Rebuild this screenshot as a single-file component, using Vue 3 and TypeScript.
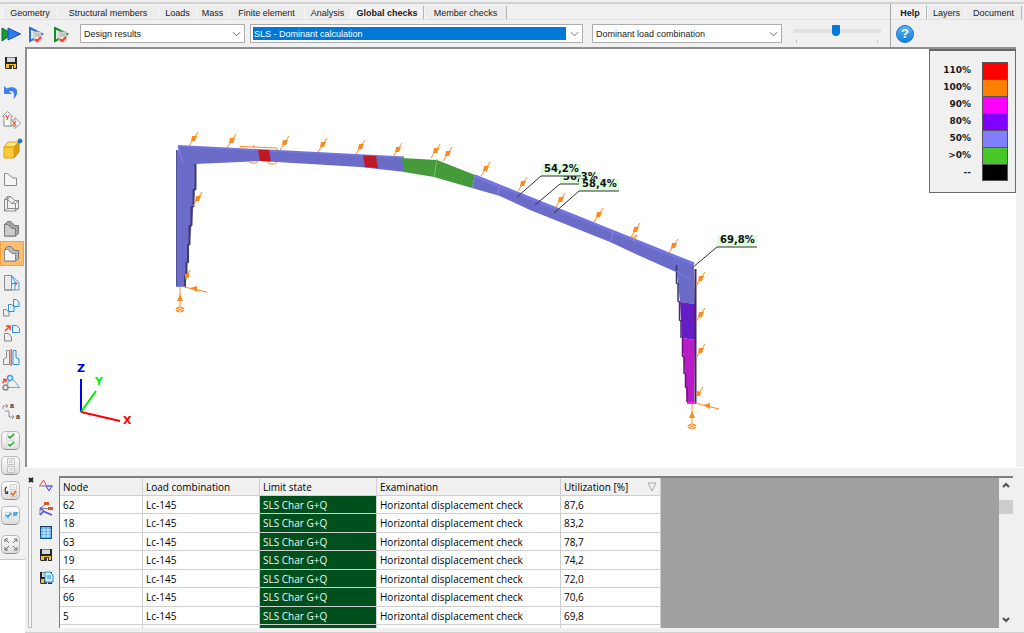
<script setup lang="ts">
import { ref } from 'vue'

interface Shape {
  d?: string
  fill?: string
  stroke?: string
  w?: number
  text?: string
  x?: number
  y?: number
}
interface Tool {
  name: string
  shapes: Shape[]
  raised?: boolean
  active?: boolean
}

const tabs = ['Geometry', 'Structural members', 'Loads', 'Mass', 'Finite element', 'Analysis', 'Global checks', 'Member checks']
const activeTab = ref('Global checks')
const sideTabs = ['Help', 'Layers', 'Document']
const activeSide = ref('Help')
const scale = ref(49)

const saveShapes: Shape[] = [
  { d: 'M4 4H16V16H5L4 15Z', fill: '#262626' },
  { d: 'M6 4.500H14V9H6Z', fill: '#d3dade' },
  { d: 'M5 11H15V15H5Z', fill: '#f2c12e' },
  { d: 'M8 12H13V16H8Z', fill: '#3a3a3a' },
  { d: 'M11 13H12V16H11Z', fill: '#eeeeee' },
]

const runTools: Tool[] = [
  {
    name: 'Run all',
    shapes: [
      { d: 'M2 4L12 10L2 17Z', fill: '#189a3a', stroke: '#0b6a25' },
      { d: 'M8 4L20.500 10L8 16Z', fill: '#2f7df0', stroke: '#1550b8' },
    ],
  },
  {
    name: 'Run design',
    shapes: [
      { d: 'M5 4L17 10L5 17Z', fill: '#dcebff', stroke: '#2b6fe0', w: 2 },
      { d: 'M9 8H16V17H9Z', fill: '#eeeeee', stroke: '#b5b5b5' },
      { d: 'M10 10H15M10 12H15', stroke: '#999999' },
      { d: 'M10 15L12 17L16 13', stroke: '#ff3a2a', w: 2 },
    ],
  },
  {
    name: 'Run check',
    shapes: [
      { d: 'M5 4L17 10L5 17Z', fill: '#dff5e2', stroke: '#178a2e', w: 2 },
      { d: 'M9 8H16V17H9Z', fill: '#eeeeee', stroke: '#b5b5b5' },
      { d: 'M10 10H15M10 12H15', stroke: '#999999' },
      { d: 'M10 15L12 17L16 13', stroke: '#ff3a2a', w: 2 },
    ],
  },
]

const toolGroups: Tool[][] = [
  [{ name: 'Save', shapes: saveShapes }],
  [{ name: 'Undo', shapes: [{ d: 'M3 4V12H11L8 9.500C12 8 14 11 12.500 17C19 12 17 2 6 6.500Z', fill: '#3f82ec' }] }],
  [
    {
      name: 'View direction',
      shapes: [
        { d: 'M10 9H14V6.500L19.500 12L14 17.500V15H3V9Z', fill: '#f4f4f4', stroke: '#999999' },
        { d: 'M1.500 5.500L6.500 0.500L11.500 5.500H10V15H3V5.500Z', fill: '#f8f8f8', stroke: '#999999' },
        { text: 'Y', x: 4, y: 9, fill: '#f03a22' },
        { text: 'X', x: 11, y: 15, fill: '#f03a22' },
      ],
    },
  ],
  [
    {
      name: 'Solid view',
      shapes: [
        { d: 'M3 7L7 2H18L13 7Z', fill: '#ffe27a', stroke: '#d9a416' },
        { d: 'M13 7L18 2V12L13 18Z', fill: '#dc9f13', stroke: '#c48a0d' },
        { d: 'M3 7H13V18H3Z', fill: '#fbc937', stroke: '#d9a416' },
        { d: 'M17 1A2 2 0 0 1 21 1A2 2 0 0 1 17 1Z', fill: '#1a79b8', stroke: '#1a79b8' },
      ],
    },
  ],
  [
    { name: 'Line view', shapes: [{ d: 'M3.500 4.500H6.500L12 9H15.500V16.500H3.500Z', fill: '#f5f5f5', stroke: '#8a8a8a' }] },
    {
      name: 'Wireframe view',
      shapes: [
        { d: 'M6.500 2.500H9.500L14 6.500H17.500V14.500H6.500Z', stroke: '#8a8a8a' },
        { d: 'M3.500 5.500H6.500L11 9.500H14.500V17H3.500ZM3.500 5.500L6.500 2.500M6.500 5.500L9.500 2.500M11 9.500L14 6.500M14.500 9.500L17.500 6.500M14.500 17L17.500 14.500M3.500 17L6.500 14.500', stroke: '#8a8a8a' },
      ],
    },
    {
      name: 'Hidden line view',
      shapes: [
        { d: 'M3.500 5.500L6.500 2.500H9.500L14 6.500H17.500V14.500L14.500 17H3.500Z', fill: '#a4a4a4', stroke: '#777777' },
        { d: 'M3.500 5.500H6.500L11 9.500H14.500V17H3.500Z', fill: '#cccccc', stroke: '#777777' },
      ],
    },
    {
      name: 'Shaded view',
      active: true,
      shapes: [
        { d: 'M3.500 5.500L6.500 2.500H9.500L14 6.500H17.500V14.500L14.500 17H3.500Z', fill: '#b8b8b8', stroke: '#777777' },
        { d: 'M3.500 5.500H6.500L11 9.500H14.500V17H3.500Z', fill: '#f5f5f5', stroke: '#888888' },
      ],
    },
  ],
  [
    {
      name: 'Move edge',
      shapes: [
        { d: 'M3.500 2.500H10.500V17H3.500Z', fill: '#ececec', stroke: '#8d8d8d' },
        { d: 'M10.500 2.500L18 9.500V17H10.500Z', fill: '#e4f1fc' },
        { d: 'M3.500 17V2.500H10.500M3.500 17H18M10.500 2.500V17', stroke: '#8d8d8d' },
        { d: 'M10.500 2.500L18 9.500V17M10.500 2.500L14 9V17', stroke: '#4e9fdc' },
        { d: 'M11 10.500H16M14 8.500L16 10.500L14 12.500', stroke: '#f2492a' },
      ],
    },
    {
      name: 'Copy',
      shapes: [
        { d: 'M2.500 11.500H5L8 14V18H2.500Z', fill: '#eeeeee', stroke: '#888888' },
        { d: 'M7.500 6.500H10.500L13 9V13.500H7.500Z', fill: '#e3f2fd', stroke: '#2b8fdd' },
        { d: 'M12.500 1.500H15.500L18 4V8.500H12.500Z', fill: '#e3f2fd', stroke: '#2b8fdd' },
      ],
    },
    {
      name: 'Move',
      shapes: [
        { d: 'M3.500 10.500H7.500L10.500 14V18H3.500Z', fill: '#eeeeee', stroke: '#888888' },
        { d: 'M11.500 2.500H15.500L18.500 5.500V9.500H11.500Z', fill: '#e3f2fd', stroke: '#2b8fdd' },
        { d: 'M4 8L9 3M5 3H9V7', stroke: '#f2492a', w: 1.5 },
      ],
    },
    {
      name: 'Mirror',
      shapes: [
        { d: 'M5.500 2.500H8.500V16.500H2.500V11L5.500 9.500Z', fill: '#eeeeee', stroke: '#888888' },
        { d: 'M12 2.500H15V9.500L18 11V16.500H12Z', fill: '#e3f2fd', stroke: '#2b8fdd' },
        { d: 'M10.200 1V18', stroke: '#ef5b46', w: 1.5 },
      ],
    },
    {
      name: 'Rotate',
      shapes: [
        { d: 'M5 14.500H18.500L11 5M5 14L9 6', stroke: '#5aaeea' },
        { d: 'M6.500 5A2.500 2.500 0 0 1 11.500 5A2.500 2.500 0 0 1 6.500 5Z', fill: '#e3f2fd', stroke: '#4b9fe0', w: 1.5 },
        { d: 'M2 14.500A2.500 2.500 0 0 1 7 14.500A2.500 2.500 0 0 1 2 14.500Z', fill: '#eeeeee', stroke: '#888888', w: 1.5 },
        { d: 'M1.500 10L4.500 6.500M2 6.500H5V9.500', stroke: '#f2492a', w: 1.5 },
      ],
    },
  ],
  [
    {
      name: 'Renumber',
      shapes: [
        { d: 'M2 7V4H7M5 2L7 4L5 6M4 9H8V15H13M11 13L13 15L11 17', stroke: '#929292' },
        { text: 'a', x: 9, y: 6, fill: '#333333' },
        { text: 'a', x: 15, y: 17, fill: '#333333' },
      ],
    },
  ],
  [
    {
      name: 'Select all',
      raised: true,
      shapes: [
        { d: 'M6 2H13V9H6ZM6 10H13V17H6Z', fill: '#ffffff', stroke: '#d6d6d6' },
        { d: 'M7 5L9 7L13 3M7 13L9 15L13 11', stroke: '#16a51d', w: 1.5 },
      ],
    },
    {
      name: 'Clear selection',
      raised: true,
      shapes: [{ d: 'M6.500 2.500H13.500V8.500H6.500ZM6.500 10.500H13.500V16.500H6.500ZM8 4L12 7M12 4L8 7M8 12L12 15M12 12L8 15', fill: '#f2f2f2', stroke: '#c3c3c3' }],
    },
    {
      name: 'Invert selection',
      raised: true,
      shapes: [
        { d: 'M9.500 3.500H15.500V8.500H9.500ZM9.500 10.500H15.500V15.500H9.500ZM11 5L14 7', fill: '#fafafa', stroke: '#cccccc' },
        { d: 'M6 6C3 7 4 12 6 12M4 12.500H6.500V10', stroke: '#444444', w: 1.2 },
        { d: 'M10 12L12 14L15 10', stroke: '#ff6a2a', w: 2 },
      ],
    },
    {
      name: 'Select by property',
      raised: true,
      shapes: [
        { d: 'M4.500 6.500H10.500V12.500H4.500Z', fill: '#ffffff', stroke: '#c9d8e4' },
        { d: 'M5 9L7 11L10 7M12 7H17M12 9H16', stroke: '#2494ea', w: 1.5 },
      ],
    },
  ],
  [
    {
      name: 'Zoom to fit',
      raised: true,
      shapes: [{ d: 'M8 8L4 4M4 7V4H7M12 8L16 4M13 4H16V7M8 11L4 15M4 12V15H7M12 11L16 15M13 15H16V12', stroke: '#6a6a6a' }],
    },
  ],
]

const dockTools: Tool[] = [
  {
    name: 'Diagram',
    shapes: [
      { d: 'M3 10H17', stroke: '#777777' },
      { d: 'M4 9L7.500 4L10 9', stroke: '#f04040' },
      { d: 'M10 10L13 15L16 10Z', fill: '#d8dcff', stroke: '#4545ec' },
    ],
  },
  {
    name: 'Detailed results',
    shapes: [
      { d: 'M4 16V10L7 7L11 4M4 9L14 10', stroke: '#777777' },
      { d: 'M4 9L9 13L16 16M4 16L8 12', stroke: '#4b50e4', w: 1.5 },
      { d: 'M8 3H13V6H8ZM12 8H17V11H12Z', fill: '#d4572c' },
    ],
  },
  {
    name: 'Table',
    shapes: [
      { d: 'M4.500 4.500H15.500V16.500H4.500Z', fill: '#4aa6ee', stroke: '#164e8a' },
      { d: 'M5 8H15M5 11H15M5 14H15M8 5V16M12 5V16', stroke: '#d8edff' },
      { d: 'M4 4H16V5H4Z', fill: '#14385f' },
    ],
  },
  { name: 'Save results', shapes: saveShapes },
  {
    name: 'Save results to document',
    shapes: [...saveShapes, { d: 'M9 4H14L17 7V14H9Z', fill: '#c9ebff', stroke: '#2294df' }, { d: 'M11 8H15M11 10H15', stroke: '#2294df' }],
  },
]

const legend = [
  { label: '110%', color: '#ff0000' },
  { label: '100%', color: '#ff8000' },
  { label: '90%', color: '#ff00ff' },
  { label: '80%', color: '#8000ff' },
  { label: '50%', color: '#8080ff' },
  { label: '>0%', color: '#48c828' },
  { label: '--', color: '#000000' },
]

const loads: [number, number][] = [
  [189, 146], [227, 148], [280, 150], [318, 152], [356, 154], [393, 157], [431, 158], [443, 161], [481, 176], [518, 191],
  [556, 207], [594, 222], [631, 237], [669, 253], [696, 286], [696, 322], [696, 358], [193, 206],
]

const labels = [
  { text: '56,3%', x: 560, y: 184, tx: 535, ty: 205 },
  { text: '54,2%', x: 541, y: 176, tx: 517, ty: 197 },
  { text: '58,4%', x: 579, y: 191, tx: 554, ty: 213 },
  { text: '69,8%', x: 717, y: 247, tx: 692, ty: 268 },
]

const rows = [
  ['62', '87,6'],
  ['18', '83,2'],
  ['63', '78,7'],
  ['19', '74,2'],
  ['64', '72,0'],
  ['66', '70,6'],
  ['5', '69,8'],
]
</script>

<template>
  <div class="app">
    <header class="ribbon">
      <section class="ribbon-main">
        <div class="tabs main-tabs" role="tablist">
          <button v-for="t in tabs" :key="t" role="tab" type="button" class="tab" :class="{ on: t === activeTab }" :aria-selected="t === activeTab" @click="activeTab = t">{{ t }}</button>
        </div>
        <div class="bar">
          <div class="run">
            <button v-for="t in runTools" :key="t.name" type="button" class="icon-btn" :aria-label="t.name">
              <svg viewBox="0 0 20 20" class="ico"><path v-for="(s, i) in t.shapes" :key="i" :d="s.d" :fill="s.fill ?? 'none'" :stroke="s.stroke" :stroke-width="s.w ?? 1" /></svg>
            </button>
          </div>
          <div class="combo c1">
            <select aria-label="Result type"><option>Design results</option></select>
            <svg viewBox="0 0 10 6" class="chev"><path d="M1 1L5 5L9 1" /></svg>
          </div>
          <div class="combo c2 chosen">
            <select aria-label="Calculation"><option>SLS - Dominant calculation</option></select>
            <svg viewBox="0 0 10 6" class="chev"><path d="M1 1L5 5L9 1" /></svg>
          </div>
          <div class="combo c3">
            <select aria-label="Load combination"><option>Dominant load combination</option></select>
            <svg viewBox="0 0 10 6" class="chev"><path d="M1 1L5 5L9 1" /></svg>
          </div>
          <div class="slider">
            <input v-model="scale" type="range" min="0" max="100" aria-label="Scale" />
            <div class="ticks"><i></i><i></i></div>
          </div>
        </div>
      </section>
      <section class="ribbon-side">
        <div class="tabs side-tabs" role="tablist">
          <button v-for="t in sideTabs" :key="t" role="tab" type="button" class="tab" :class="{ on: t === activeSide }" :aria-selected="t === activeSide" @click="activeSide = t">{{ t }}</button>
        </div>
        <div class="bar">
          <button type="button" class="help" aria-label="Help">?</button>
        </div>
      </section>
    </header>

    <main class="body">
      <aside class="tool-col">
        <div class="tools">
          <div v-for="(g, gi) in toolGroups" :key="gi" class="tool-group">
            <button v-for="t in g" :key="t.name" type="button" class="tool" :class="{ active: t.active }" :aria-label="t.name">
              <span :class="{ raised: t.raised }">
                <svg viewBox="0 0 20 20" class="ico">
                  <template v-for="(s, i) in t.shapes" :key="i">
                    <text v-if="s.text" :x="s.x" :y="s.y" :fill="s.fill" class="ico-text">{{ s.text }}</text>
                    <path v-else :d="s.d" :fill="s.fill ?? 'none'" :stroke="s.stroke" :stroke-width="s.w ?? 1" />
                  </template>
                </svg>
              </span>
            </button>
          </div>
        </div>
      </aside>

      <div class="work">
        <section class="viewport">
          <svg class="scene" viewBox="27 49 989 418" preserveAspectRatio="xMinYMin meet">
            <!-- left column -->
            <path d="M177 150L196 154L195 190L192 222L189 246L187 266L185 287L176 286Z" fill="#6a6cc8" />
            <path d="M195.500 156V189L193.500 190V206L191.500 207V225L189.500 226V244L188 245V262L186.500 263V275L185 276V287" fill="none" stroke="#3c3c70" stroke-width="2" />
            <path d="M176.500 150V286" stroke="#4f5096" />
            <!-- left rafter -->
            <path d="M178 146L404 157L405 172L360 167L260 161L196 164H181Z" fill="#6a6cc8" />
            <path d="M178 146L404 157.500" stroke="#7375d8" stroke-width="2" />
            <path d="M178 147L183 163" stroke="#8284e8" />
            <path d="M258 150H269L271 161.500L260 161Z" fill="#bd1a26" />
            <path d="M363 155.500L376 156L378 168L365 167Z" fill="#bd1a26" />
            <path d="M402 158L437 160L434 177L404 172Z" fill="#459a3c" />
            <path d="M437 160L475 175L472 188L434 177Z" fill="#459a3c" />
            <path d="M437 159L434 177" stroke="#63c650" />
            <!-- right rafter -->
            <path d="M475 175L694 263L692 278L676 272L640 256L610 242L530 210L500 196L472 188Z" fill="#6a6cc8" />
            <path d="M475 176L694 264" stroke="#7375e0" stroke-width="3" />
            <path d="M499 186L498 195M613 231L611 241" stroke="#8688e2" />
            <!-- right column -->
            <path d="M676 265L694 268L695 304L680 302Z" fill="#6a6cc8" />
            <path d="M680 302L695 304V340L682 338Z" fill="#661cc4" />
            <path d="M682 338L695 340L694 404L687 402Z" fill="#b91bc6" />
            <path d="M676.500 265V283L678 284V301L679.500 302V320L681 321V338" fill="none" stroke="#3c3470" stroke-width="1.500" />
            <path d="M682.500 338V356L684 357V373L685.500 374V387L687 388V402" fill="none" stroke="#701080" stroke-width="1.500" />
            <path d="M695.500 269V404" stroke="#43265e" stroke-width="2" />
            <path d="M676 271L690 279" stroke="#7d7fe6" />
            <path d="M687 403H695" stroke="#ee25ee" stroke-width="2" />
            <path d="M176 286.500H185" stroke="#8284f0" />

            <g class="loads">
              <g v-for="(p, i) in loads" :key="i" :transform="`translate(${p[0]} ${p[1]})`">
                <path d="M0 0L9 -14" />
                <path class="head" d="M2 -5L3 -10L8 -10L6 -5Z" />
              </g>
              <path d="M186 280L190 270M697 396L703 387" />
              <path class="head" d="M185 279V274H189V277ZM696 396L697 391L701 392L700 396Z" />
              <path d="M184 287L207 292M695 403L719 409M180 287V307M692 404V424" />
              <path class="head" d="M190 288L197 286V292ZM703 405L710 403V409ZM180 294L177 301H183ZM692 411L689 418H695Z" />
              <path d="M240 149V146.500L277 148V150M254 145L253 148M248 161C251 164 256 164 258 161M266 161C269 165 275 165 277 162M631 238L637 235L633 241" />
              <ellipse cx="180" cy="309.500" rx="4" ry="2.500" />
              <ellipse cx="692" cy="426.500" rx="4" ry="2.500" />
              <path d="M177 308L183 311M177 311L183 308M689 425L695 428M689 428L695 425" />
            </g>

            <g class="labels">
              <g v-for="l in labels" :key="l.text">
                <rect :x="l.x" :y="l.y - 12" width="40" height="12" />
                <text :x="l.x + 3" :y="l.y - 4">{{ l.text }}</text>
                <path :d="`M${l.tx} ${l.ty}L${l.x} ${l.y}H${l.x + 40}`" />
              </g>
            </g>

            <g class="axes">
              <path d="M81 412V379" stroke="#0000ff" />
              <path d="M81 412L96 391" stroke="#00ee00" />
              <path d="M81 412L120 421" stroke="#ff0000" />
              <text x="77" y="372" fill="#0000e0">Z</text>
              <text x="95" y="385" fill="#00ee00">Y</text>
              <text x="123" y="424" fill="#ff0000">X</text>
            </g>
          </svg>
          <ul class="legend">
            <li v-for="l in legend" :key="l.label">
              <span>{{ l.label }}</span>
              <i :style="{ background: l.color }"></i>
            </li>
          </ul>
        </section>

        <section class="dock">
          <div class="grip">
            <button type="button" class="close" aria-label="Close panel">
              <svg viewBox="0 0 6 6"><path d="M1 1L5 5M5 1L1 5" /></svg>
            </button>
            <div class="grip-line"></div>
          </div>
          <div class="dock-tools">
            <button v-for="t in dockTools" :key="t.name" type="button" class="icon-btn" :aria-label="t.name">
              <svg viewBox="0 0 20 20" class="ico"><path v-for="(s, i) in t.shapes" :key="i" :d="s.d" :fill="s.fill ?? 'none'" :stroke="s.stroke" :stroke-width="s.w ?? 1" /></svg>
            </button>
          </div>
          <div class="grid-panel">
            <div class="grid-area">
              <table>
                <colgroup><col class="w-node" /><col class="w-text" /><col class="w-text" /><col class="w-exam" /><col class="w-util" /></colgroup>
                <thead>
                  <tr>
                    <th>Node</th>
                    <th>Load combination</th>
                    <th>Limit state</th>
                    <th>Examination</th>
                    <th>
                      <div class="sorted">Utilization [%]<svg viewBox="0 0 10 10"><path d="M1 1H9L5 9Z" /></svg></div>
                    </th>
                  </tr>
                </thead>
                <tbody>
                  <tr v-for="r in rows" :key="r[0]">
                    <td>{{ r[0] }}</td>
                    <td>Lc-145</td>
                    <td class="ok">SLS Char G+Q</td>
                    <td>Horizontal displacement check</td>
                    <td>{{ r[1] }}</td>
                  </tr>
                  <tr><td></td><td></td><td class="ok"></td><td></td><td></td></tr>
                </tbody>
              </table>
            </div>
            <div class="scroll">
              <button type="button" aria-label="Scroll up"><svg viewBox="0 0 8 8"><path d="M1 5L4 2L7 5" /></svg></button>
              <div class="track"><div class="thumb"></div></div>
              <button type="button" aria-label="Scroll down"><svg viewBox="0 0 8 8"><path d="M1 2L4 5L7 2" /></svg></button>
            </div>
          </div>
        </section>
      </div>
    </main>
  </div>
</template>

<style>
body {
  margin: 0;
}
</style>

<style scoped>
.app {
  height: 100vh;
  min-height: 600px;
  display: flex;
  flex-direction: column;
  background: #f0f0f0;
  color: #1a1a1a;
  font: 9px/12px "Liberation Sans", Arial, sans-serif;
  overflow: hidden;
}
.app *,
.app *::before {
  box-sizing: border-box;
}
button {
  font: inherit;
  color: inherit;
  background: none;
  border: 0;
  padding: 0;
  margin: 0;
}
svg {
  display: block;
}
.ico {
  width: 20px;
  height: 20px;
  overflow: visible;
}
.ico-text {
  font: bold 7px "Liberation Sans", Arial, sans-serif;
}

.ribbon {
  display: flex;
  margin-top: 2px;
  border-top: 2px solid #d2d2d2;
}
.ribbon-main {
  flex: 1;
  min-width: 0;
}
.ribbon-side {
  width: 134px;
  border-left: 1px solid #a8a8a8;
}
.tabs {
  display: grid;
  height: 16px;
  padding: 2px 0 0 2px;
  border-bottom: 1px solid #e2e2e2;
}
.main-tabs {
  grid-template-columns: 55px 101px 38px 32px 76px 46px 74px 83px;
}
.side-tabs {
  grid-template-columns: 34px 38px 57px;
}
.tab {
  background: #ececec;
  border-left: 1px solid #f8f8f8;
  border-radius: 4px 0 0 0;
  white-space: nowrap;
  text-align: center;
}
.tab:last-child {
  border-right: 1px solid #b4b4b4;
}
.tab.on {
  font-weight: bold;
  background: #f2f2f2;
  border-right: 1px solid #b4b4b4;
}
.bar {
  display: flex;
  align-items: center;
  height: 27px;
}
.run {
  display: flex;
  gap: 5px;
  width: 80px;
}
.icon-btn {
  width: 20px;
  height: 20px;
}
.combo {
  position: relative;
  height: 19px;
  border: 1px solid #adadad;
  background: #fff;
  padding: 2px 16px 2px 2px;
}
.combo select {
  appearance: none;
  display: block;
  width: 100%;
  height: 13px;
  border: 0;
  padding: 0 1px;
  background: #fff;
  color: #1a1a1a;
  font: inherit;
}
.chosen select {
  background: #0078d7;
  color: #fff;
}
.chev {
  position: absolute;
  right: 3px;
  top: 6px;
  width: 9px;
  height: 6px;
  fill: none;
  stroke: #606060;
  pointer-events: none;
}
.c1 {
  width: 165px;
  margin-right: 5px;
}
.c2 {
  flex: 1;
  margin-right: 9px;
}
.c3 {
  width: 190px;
}
.slider {
  width: 88px;
  margin: 0 9px 0 11px;
}
.slider input {
  appearance: none;
  display: block;
  width: 100%;
  height: 12px;
  margin: 0 0 3px;
  background: none;
}
.slider input::-webkit-slider-runnable-track {
  height: 4px;
  background: #e2e2e2;
}
.slider input::-webkit-slider-thumb {
  appearance: none;
  width: 8px;
  height: 11px;
  margin-top: -4px;
  background: #0078d7;
  border-radius: 1px 1px 4px 4px;
}
.ticks {
  display: flex;
  justify-content: space-between;
  padding: 0 3px;
}
.ticks i {
  width: 1px;
  height: 3px;
  background: #c0c0c0;
}
.help {
  width: 18px;
  height: 18px;
  margin-left: 5px;
  border-radius: 50%;
  border: 1px solid #1673c4;
  background: linear-gradient(#55b4f2, #1480dc);
  color: #fff;
  font: bold 13px/16px "Liberation Sans", Arial, sans-serif;
  text-align: center;
}

.body {
  flex: 1;
  min-height: 0;
  display: flex;
}
.tool-col {
  width: 25px;
  background: #fff;
}
.tools {
  display: flex;
  flex-direction: column;
  gap: 4px;
  padding: 3px 0 2px;
  background: #f0f0f0;
  border-bottom: 1px solid #c8c8c8;
}
.tool {
  display: flex;
  width: 24px;
  height: 25px;
  padding-left: 1px;
  align-items: center;
}
.tool.active {
  background: #fdbf6e;
  border: 1px solid #f5a23c;
  padding-left: 0;
}
.raised {
  height: 19px;
  width: 19px;
  border-radius: 5px;
  background: linear-gradient(#fff, #dcdcdc);
  border: 1px solid #b9b9b9;
  border-bottom-color: #8e8e8e;
  overflow: hidden;
}
.raised .ico {
  margin: -1px;
}

.work {
  flex: 1;
  min-width: 0;
  display: flex;
  flex-direction: column;
}
.viewport {
  position: relative;
  flex: 1;
  min-height: 0;
  margin-right: 8px;
  background: #fff;
  border: solid #8f8f8f;
  border-width: 2px 0 0 2px;
}
.scene {
  width: 100%;
  height: 100%;
}
.loads {
  fill: none;
  stroke: #fb8b1e;
}
.loads .head {
  fill: #fb8b1e;
  stroke: none;
}
.labels rect {
  fill: #e0fbe0;
}
.labels path {
  fill: none;
  stroke: #303030;
}
.labels text {
  font: bold 10px "DejaVu Sans", Verdana, sans-serif;
  fill: #111;
}
.axes path {
  stroke-width: 2px;
}
.axes text {
  font: bold 11px "DejaVu Sans", Verdana, sans-serif;
}
.legend {
  position: absolute;
  top: 0;
  right: 0;
  width: 87px;
  height: 144px;
  margin: 0;
  padding: 11px 7px 13px 0;
  list-style: none;
  display: grid;
  grid-template-rows: repeat(7, 1fr);
  background: #f0f0f0;
  border: 1px solid #6c6c6c;
  border-top: 2px solid #666;
  font: bold 9px/17px "DejaVu Sans", Verdana, sans-serif;
}
.legend li {
  display: grid;
  grid-template-columns: 1fr 26px;
  gap: 11px;
  text-align: right;
}
.legend i {
  border: 1px solid #555;
  border-bottom: 0;
}
.legend li:last-child i {
  border-bottom: 1px solid #555;
}

.dock {
  height: 166px;
  display: flex;
  padding: 8px 11px 4px 3px;
  border-top: 1px solid #fff;
  border-bottom: 1px solid #d0d0d0;
}
.grip {
  width: 8px;
  display: flex;
  flex-direction: column;
  gap: 4px;
  padding-top: 1px;
}
.close {
  width: 6px;
  height: 6px;
}
.close svg {
  width: 6px;
  height: 6px;
  stroke: #222;
  stroke-width: 2px;
}
.grip-line {
  flex: 1;
  width: 4px;
  border: 1px solid #bcbcbc;
  background: #f8f8f8;
}
.dock-tools {
  width: 23px;
  display: flex;
  flex-direction: column;
  gap: 3px;
}
.grid-panel {
  flex: 1;
  min-width: 0;
  display: flex;
  border-top: 2px solid #7e7e7e;
  border-left: 1px solid #7e7e7e;
}
.grid-area {
  flex: 1;
  min-width: 0;
  overflow: hidden;
  background: #a0a0a0;
}
table {
  table-layout: fixed;
  width: 601px;
  border-collapse: separate;
  border-spacing: 0;
  font: 10px/12px "Open Sans", "Noto Sans", sans-serif;
  color: #000;
}
.w-node {
  width: 83px;
}
.w-text {
  width: 117px;
}
.w-exam {
  width: 184px;
}
.w-util {
  width: 100px;
}
th,
td {
  padding: 0 3px;
  text-align: left;
  white-space: nowrap;
  border-right: 1px solid #cfcfcf;
  border-bottom: 1px solid #cfcfcf;
}
th {
  height: 18px;
  font-weight: normal;
  background: #f0f0f0;
}
td {
  height: 18px;
  background: #fff;
}
tr:nth-child(even) td {
  height: 19px;
}
td.ok {
  background: #00501e;
  color: #f0f8f2;
}
.sorted {
  display: flex;
  justify-content: space-between;
  align-items: center;
}
.sorted svg {
  width: 10px;
  height: 10px;
  fill: none;
  stroke: #a8a8a8;
}
.scroll {
  width: 14px;
  display: flex;
  flex-direction: column;
  background: #f0f0f0;
}
.scroll button {
  height: 16px;
  display: flex;
  align-items: center;
  justify-content: center;
}
.scroll svg {
  width: 8px;
  height: 8px;
  fill: none;
  stroke: #505050;
  stroke-width: 2px;
}
.track {
  flex: 1;
  padding-top: 6px;
}
.thumb {
  height: 14px;
  background: #cdcdcd;
}
</style>
